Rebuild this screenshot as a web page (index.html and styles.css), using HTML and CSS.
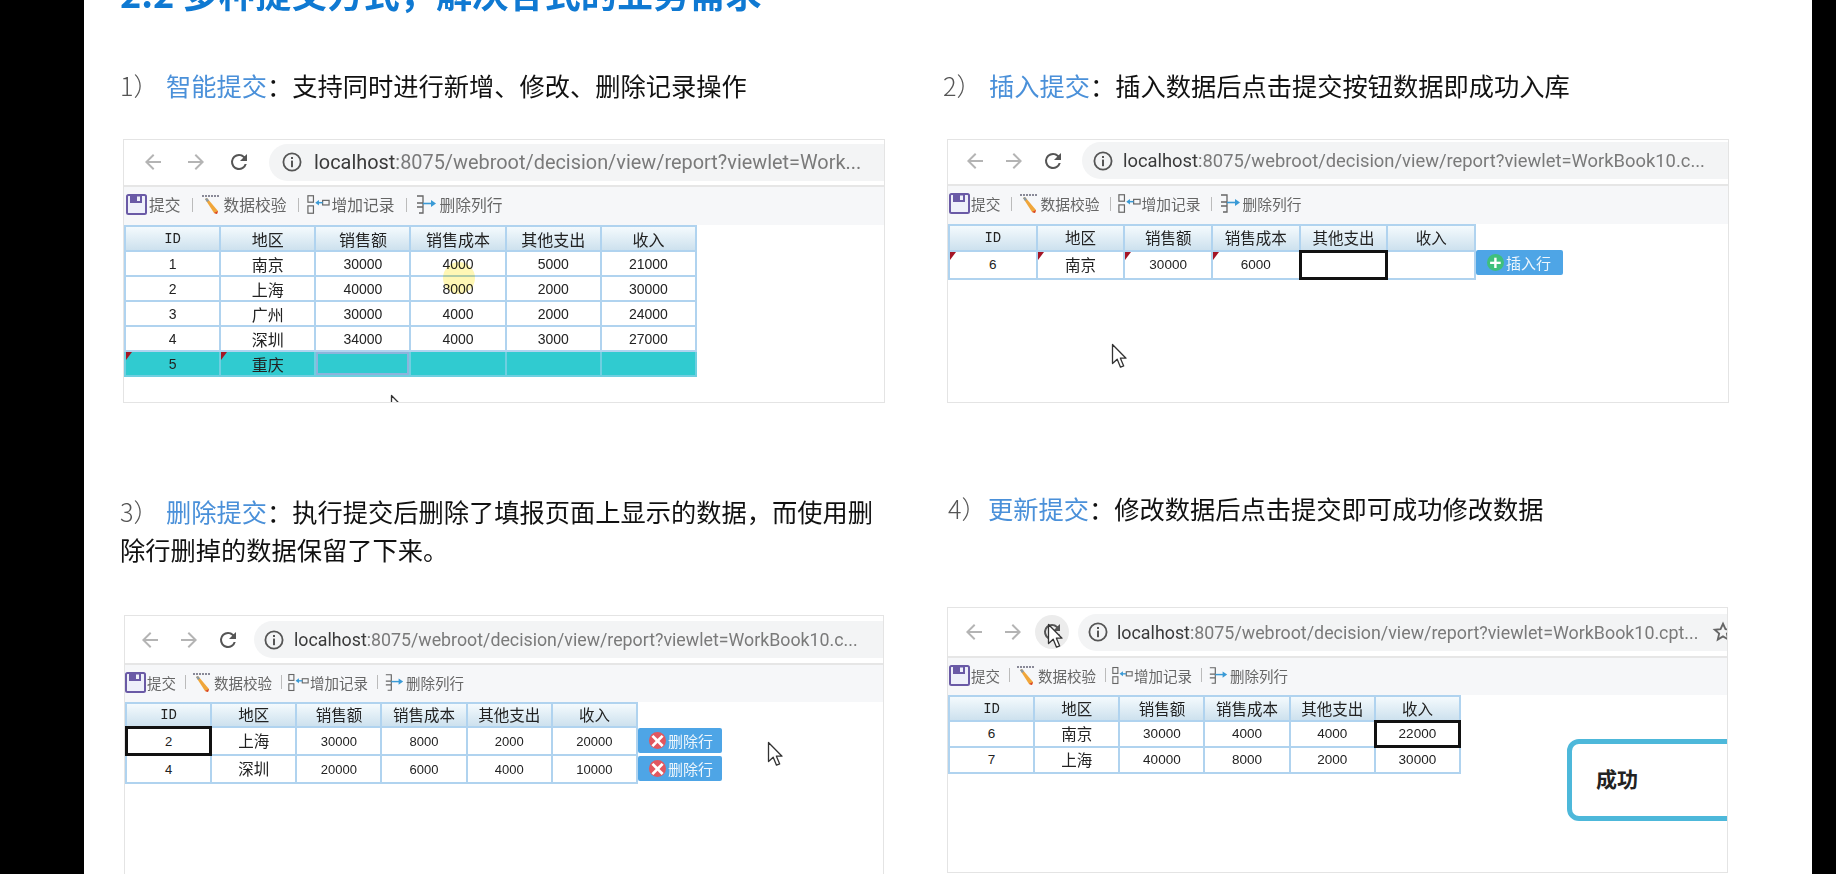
FILE: index.html
```html
<!DOCTYPE html>
<html lang="zh-CN">
<head>
<meta charset="utf-8">
<title>多种提交方式</title>
<link rel="stylesheet" href="styles.css">
</head>
<body>
<svg class="defs" aria-hidden="true">
  <symbol id="i-back" viewBox="0 0 24 24"><path d="M20 11H7.8l5.6-5.6L12 4l-8 8 8 8 1.4-1.4L7.8 13H20z"/></symbol>
  <symbol id="i-forward" viewBox="0 0 24 24"><path d="M4 11h12.2l-5.6-5.6L12 4l8 8-8 8-1.4-1.4 5.6-5.6H4z"/></symbol>
  <symbol id="i-reload" viewBox="0 0 24 24"><path d="M17.65 6.35A7.96 7.96 0 0 0 12 4a8 8 0 1 0 7.73 10h-2.08A6 6 0 1 1 12 6c1.66 0 3.14.69 4.22 1.78L13 11h7V4z"/></symbol>
  <symbol id="i-info" viewBox="0 0 22 22"><circle cx="11" cy="11" r="8.6" fill="none" stroke="#555" stroke-width="1.8"/><rect x="10" y="9.6" width="2" height="6.6" fill="#555"/><rect x="10" y="6" width="2" height="2" fill="#555"/></symbol>
  <symbol id="i-star" viewBox="0 0 24 24"><path d="M12 3l2.7 6 6.3.6-4.8 4.2 1.5 6.4L12 16.8l-5.7 3.4 1.5-6.4L3 9.6 9.300 9z" fill="none" stroke="#666" stroke-width="2"/></symbol>
  <symbol id="i-save" viewBox="0 0 21 21"><rect x="1" y="1" width="19" height="19" rx="1.500" fill="#eef0fa" stroke="#6a5aa6" stroke-width="2"/><rect x="4" y="1" width="12" height="8" fill="#6a5aa6"/><rect x="11" y="2.500" width="3" height="4.500" fill="#eef0fa"/></symbol>
  <symbol id="i-check" viewBox="0 0 21 21"><path d="M1 2h17" stroke="#667" stroke-width="1.500" stroke-dasharray="2 1" fill="none"/><path d="M4 5l2-1 11 13-1 3-3-1z" fill="#f0a63a"/><path d="M13 19l3 1 1-3z" fill="#d9402c"/><path d="M4 5l2-1 2 2.500-2 1.500z" fill="#8a9aa6"/></symbol>
  <symbol id="i-add" viewBox="0 0 25 21" preserveAspectRatio="xMinYMid meet"><g fill="none" stroke="#666" stroke-width="1.300"><rect x="1" y="1" width="6" height="7"/><rect x="1" y="12" width="6" height="8"/><rect x="17" y="6" width="7" height="5"/></g><path d="M17 8.500h-5" stroke="#3a9ad6" stroke-width="1.600"/><path d="M9 8.500l4-3v6z" fill="#3a9ad6"/></symbol>
  <symbol id="i-del" viewBox="0 0 23 21" preserveAspectRatio="xMinYMid meet"><path d="M2 2h6v7H2M8 9v4H2M8 13v6H4" fill="none" stroke="#666" stroke-width="1.300"/><path d="M8 9.500h9" stroke="#3a9ad6" stroke-width="1.600"/><path d="M21 9.500l-5-3.500v7z" fill="#3a9ad6"/></symbol>
  <symbol id="i-cursor" viewBox="0 0 16 26"><path d="M1.500 1.500v19l4.700-4.300 3.300 8 3.200-1.300-3.300-7.700h5.600z" fill="#fff" stroke="#333" stroke-width="1.300" stroke-linejoin="round"/></symbol>
</svg>

<main class="slide">
  <h1 class="title">2.2 多种提交方式，解决各式的业务需求</h1>
  <div class="board">

    <section class="item item-1">
      <p class="desc"><span class="num">1）</span><span class="label">智能提交</span>：支持同时进行新增、修改、删除记录操作</p>
      <div class="shot shot-1">
        <div class="chrome">
          <svg class="nav nav-off"><use href="#i-back"/></svg>
          <svg class="nav nav-off"><use href="#i-forward"/></svg>
          <svg class="nav nav-on"><use href="#i-reload"/></svg>
          <div class="pill"><svg class="info"><use href="#i-info"/></svg><span class="url"><b>localhost</b>:8075/webroot/decision/view/report?viewlet=Work...</span></div>
        </div>
        <div class="tools">
          <svg class="ti"><use href="#i-save"/></svg><span class="tt">提交</span><i class="ts"></i>
          <svg class="ti"><use href="#i-check"/></svg><span class="tt">数据校验</span><i class="ts"></i>
          <svg class="ti ti-wide"><use href="#i-add"/></svg><span class="tt">增加记录</span><i class="ts"></i>
          <svg class="ti ti-wide"><use href="#i-del"/></svg><span class="tt">删除列行</span>
        </div>
        <div class="sheet">
          <table>
            <thead><tr><th class="mono">ID</th><th>地区</th><th>销售额</th><th>销售成本</th><th>其他支出</th><th>收入</th></tr></thead>
            <tbody>
              <tr><td>1</td><td class="cjk">南京</td><td>30000</td><td>4000</td><td>5000</td><td>21000</td></tr>
              <tr><td>2</td><td class="cjk">上海</td><td>40000</td><td>8000</td><td>2000</td><td>30000</td></tr>
              <tr><td>3</td><td class="cjk">广州</td><td>30000</td><td>4000</td><td>2000</td><td>24000</td></tr>
              <tr><td>4</td><td class="cjk">深圳</td><td>34000</td><td>4000</td><td>3000</td><td>27000</td></tr>
              <tr class="row-new"><td class="flag">5</td><td class="cjk flag">重庆</td><td class="cell-soft"></td><td></td><td></td><td></td></tr>
            </tbody>
          </table>
        </div>
        <span class="spot"></span>
        <svg class="cursor cursor-1"><use href="#i-cursor"/></svg>
      </div>
    </section>

    <section class="item item-2">
      <p class="desc"><span class="num">2）</span><span class="label">插入提交</span>：插入数据后点击提交按钮数据即成功入库</p>
      <div class="shot shot-2">
        <div class="chrome">
          <svg class="nav nav-off"><use href="#i-back"/></svg>
          <svg class="nav nav-off"><use href="#i-forward"/></svg>
          <svg class="nav nav-on"><use href="#i-reload"/></svg>
          <div class="pill"><svg class="info"><use href="#i-info"/></svg><span class="url"><b>localhost</b>:8075/webroot/decision/view/report?viewlet=WorkBook10.c...</span></div>
        </div>
        <div class="tools">
          <svg class="ti"><use href="#i-save"/></svg><span class="tt">提交</span><i class="ts"></i>
          <svg class="ti"><use href="#i-check"/></svg><span class="tt">数据校验</span><i class="ts"></i>
          <svg class="ti ti-wide"><use href="#i-add"/></svg><span class="tt">增加记录</span><i class="ts"></i>
          <svg class="ti ti-wide"><use href="#i-del"/></svg><span class="tt">删除列行</span>
        </div>
        <div class="sheet">
          <table>
            <thead><tr><th class="mono">ID</th><th>地区</th><th>销售额</th><th>销售成本</th><th>其他支出</th><th>收入</th></tr></thead>
            <tbody>
              <tr><td class="flag">6</td><td class="cjk flag">南京</td><td class="flag">30000</td><td class="flag">6000</td><td class="cell-active"></td><td></td></tr>
            </tbody>
          </table>
          <div class="actions">
            <button class="act"><span class="badge badge-add">+</span>插入行</button>
          </div>
        </div>
        <svg class="cursor cursor-2"><use href="#i-cursor"/></svg>
      </div>
    </section>

    <section class="item item-3">
      <p class="desc"><span class="num">3）</span><span class="label">删除提交</span>：执行提交后删除了填报页面上显示的数据，而使用删除行删掉的数据保留了下来。</p>
      <div class="shot shot-3">
        <div class="chrome">
          <svg class="nav nav-off"><use href="#i-back"/></svg>
          <svg class="nav nav-off"><use href="#i-forward"/></svg>
          <svg class="nav nav-on"><use href="#i-reload"/></svg>
          <div class="pill"><svg class="info"><use href="#i-info"/></svg><span class="url"><b>localhost</b>:8075/webroot/decision/view/report?viewlet=WorkBook10.c...</span></div>
        </div>
        <div class="tools">
          <svg class="ti"><use href="#i-save"/></svg><span class="tt">提交</span><i class="ts"></i>
          <svg class="ti"><use href="#i-check"/></svg><span class="tt">数据校验</span><i class="ts"></i>
          <svg class="ti ti-wide"><use href="#i-add"/></svg><span class="tt">增加记录</span><i class="ts"></i>
          <svg class="ti ti-wide"><use href="#i-del"/></svg><span class="tt">删除列行</span>
        </div>
        <div class="sheet">
          <table>
            <thead><tr><th class="mono">ID</th><th>地区</th><th>销售额</th><th>销售成本</th><th>其他支出</th><th>收入</th></tr></thead>
            <tbody>
              <tr><td class="cell-active">2</td><td class="cjk">上海</td><td>30000</td><td>8000</td><td>2000</td><td>20000</td></tr>
              <tr><td>4</td><td class="cjk">深圳</td><td>20000</td><td>6000</td><td>4000</td><td>10000</td></tr>
            </tbody>
          </table>
          <div class="actions">
            <button class="act"><span class="badge badge-del">×</span>删除行</button>
            <button class="act"><span class="badge badge-del">×</span>删除行</button>
          </div>
        </div>
        <svg class="cursor cursor-3"><use href="#i-cursor"/></svg>
      </div>
    </section>

    <section class="item item-4">
      <p class="desc"><span class="num">4）</span><span class="label">更新提交</span>：修改数据后点击提交即可成功修改数据</p>
      <div class="shot shot-4">
        <div class="chrome">
          <svg class="nav nav-off"><use href="#i-back"/></svg>
          <svg class="nav nav-off"><use href="#i-forward"/></svg>
          <svg class="nav nav-on nav-hover"><use href="#i-reload"/></svg>
          <div class="pill"><svg class="info"><use href="#i-info"/></svg><span class="url"><b>localhost</b>:8075/webroot/decision/view/report?viewlet=WorkBook10.cpt...</span><svg class="star"><use href="#i-star"/></svg></div>
        </div>
        <div class="tools">
          <svg class="ti"><use href="#i-save"/></svg><span class="tt">提交</span><i class="ts"></i>
          <svg class="ti"><use href="#i-check"/></svg><span class="tt">数据校验</span><i class="ts"></i>
          <svg class="ti ti-wide"><use href="#i-add"/></svg><span class="tt">增加记录</span><i class="ts"></i>
          <svg class="ti ti-wide"><use href="#i-del"/></svg><span class="tt">删除列行</span>
        </div>
        <div class="sheet">
          <table>
            <thead><tr><th class="mono">ID</th><th>地区</th><th>销售额</th><th>销售成本</th><th>其他支出</th><th>收入</th></tr></thead>
            <tbody>
              <tr><td>6</td><td class="cjk">南京</td><td>30000</td><td>4000</td><td>4000</td><td class="cell-active">22000</td></tr>
              <tr><td>7</td><td class="cjk">上海</td><td>40000</td><td>8000</td><td>2000</td><td>30000</td></tr>
            </tbody>
          </table>
        </div>
        <div class="toast">成功</div>
        <svg class="cursor cursor-4"><use href="#i-cursor"/></svg>
      </div>
    </section>

  </div>
</main>
</body>
</html>
```

FILE: styles.css
```css
* { box-sizing: border-box; }

html, body {
  margin: 0;
  height: 100%;
  background: #000;
  overflow: hidden;
}

body {
  font-family: "Noto Sans CJK SC", "Noto Sans", sans-serif;
}

.defs { display: none; }

.slide {
  width: 1728px;
  height: 874px;
  margin-left: 84px;
  padding-left: 36px;
  background: #fff;
  overflow: hidden;
}

.title {
  margin: -26px 0 0;
  height: 95px;
  font-size: 36.200px;
  line-height: 36px;
  font-weight: 700;
  color: #0f79d2;
  white-space: nowrap;
}

.board {
  display: grid;
  grid-template-columns: 823px 1fr;
  grid-template-rows: 334px 1fr;
  row-gap: 87px;
}

.desc {
  margin: -3px 0 0;
  font-size: 25.250px;
  line-height: 38px;
  color: #111;
}

.num {
  display: inline-block;
  width: var(--num-w);
  color: #555;
  font-weight: 300;
}

.label { color: #4a90d9; }

.item-1 { --num-w: 46px; }
.item-2 { --num-w: 46px; }
.item-3 { --num-w: 46px; padding-top: 5px; }
.item-4 { --num-w: 40px; padding-left: 5px; padding-top: 2px; }

.item-3 .desc { max-width: 760px; }

/* screenshot panel */
.shot {
  position: relative;
  overflow: hidden;
  background: #fff;
  border: 1px solid #e4e4e4;
  width: var(--w);
  height: var(--h);
  margin-top: var(--mt);
  margin-left: var(--ml);
}

.shot-1 {
  --w: 762px; --h: 264px; --mt: 35px; --ml: 3px;
  --bar-h: 47px; --bar-pb: 1px; --pad: 17px; --nav-gap: 19px; --pill-ml: 18px; --pill-pl: 12px; --info-gap: 11px; --url: 19.900px;
  --tool-h: 38px; --tool-size: 15.750px; --tool-pl: 2px; --ts-l: 11px; --ts-r: 8px; --ti-gap: 2px; --wide: 23px;
  --cw: 95.500px; --th-h: 25px; --td-h: 25px; --num: 14px; --cjk: 16px; --act-w: 85px;
}
.shot-2 {
  --w: 782px; --h: 264px; --mt: 35px; --ml: 4px;
  --bar-h: 46px; --bar-pb: 3px; --pad: 15px; --nav-gap: 15px; --pill-ml: 17px; --pill-pl: 10px; --info-gap: 9px; --url: 18.370px;
  --tool-h: 38px; --tool-size: 14.750px; --tool-pl: 1px; --ts-l: 10px; --ts-r: 7px; --ti-gap: 1px; --wide: 23px;
  --cw: 88px; --th-h: 26px; --td-h: 28px; --num: 13.500px; --cjk: 15.500px; --act-w: 87px;
}
.shot-3 {
  --w: 760px; --h: 300px; --mt: 47px; --ml: 4px;
  --bar-h: 49px; --bar-pb: 0px; --pad: 13px; --nav-gap: 15px; --pill-ml: 14px; --pill-pl: 9px; --info-gap: 9px; --url: 17.800px;
  --tool-h: 37px; --tool-size: 14.500px; --tool-pl: 0px; --ts-l: 9px; --ts-r: 6px; --ti-gap: 1px; --wide: 21px;
  --cw: 85.500px; --th-h: 24px; --td-h: 28px; --num: 13px; --cjk: 15.500px; --act-w: 84px;
}
.shot-4 {
  --w: 781px; --h: 266px; --mt: 80px; --ml: -1px;
  --bar-h: 50px; --bar-pb: 0px; --pad: 14px; --nav-gap: 15px; --pill-ml: 14px; --pill-pl: 9px; --info-gap: 8px; --url: 17.850px;
  --tool-h: 37px; --tool-size: 14.500px; --tool-pl: 1px; --ts-l: 9px; --ts-r: 6px; --ti-gap: 1px; --wide: 21px;
  --cw: 85.500px; --th-h: 25px; --td-h: 26px; --num: 13.500px; --cjk: 15.500px; --act-w: 85px;
}

/* browser bar */
.chrome {
  display: flex;
  align-items: center;
  gap: var(--nav-gap);
  height: var(--bar-h);
  padding-left: var(--pad);
  padding-bottom: var(--bar-pb);
  background: #fff;
  border-bottom: 2px solid #e6e6e6;
}

.nav {
  flex: none;
  width: 24px;
  height: 24px;
}

.nav-off { fill: #b4b4b4; }
.nav-on { fill: #555; }

.nav-hover {
  border-radius: 50%;
  background: #ececec;
  box-shadow: 0 0 0 5px #ececec;
}

.pill {
  flex: 1;
  display: flex;
  align-items: center;
  height: 37px;
  margin-left: calc(var(--pill-ml) - var(--nav-gap));
  margin-right: -30px;
  padding-left: var(--pill-pl);
  background: #f3f4f5;
  border-radius: 19px 0 0 19px;
}

.info {
  flex: none;
  width: 22px;
  height: 22px;
  margin-right: var(--info-gap);
}

.url {
  font-family: Roboto, sans-serif;
  font-size: var(--url);
  color: #7a7a7a;
  white-space: nowrap;
}

.url b {
  font-weight: 400;
  color: #3a3a3a;
}

.star {
  flex: none;
  width: 22px;
  height: 22px;
  margin-left: 14px;
}

/* report toolbar */
.tools {
  display: flex;
  align-items: center;
  height: var(--tool-h);
  padding-left: var(--tool-pl);
  padding-bottom: 3px;
  background: #f6f7f9;
  font-size: var(--tool-size);
  color: #666;
}

.ti {
  flex: none;
  width: 21px;
  height: 21px;
  margin-right: var(--ti-gap);
}

.ti-wide { width: var(--wide); }

.tt { white-space: nowrap; }

.ts {
  flex: none;
  width: 1px;
  height: 14px;
  margin: 0 var(--ts-r) 0 var(--ts-l);
  background: #bbb;
}

/* data table */
.sheet { display: flex; }

table {
  flex: none;
  width: calc(var(--cw) * 6);
  table-layout: fixed;
  border-collapse: collapse;
  color: #222;
  font-family: "Liberation Sans", "Noto Sans CJK SC", sans-serif;
}

th, td {
  padding: 0;
  border: 2px solid #b0d3ef;
  text-align: center;
  font-weight: 400;
  position: relative;
  line-height: 1;
}

th {
  height: var(--th-h);
  font-size: var(--cjk);
  font-family: "Noto Sans CJK SC", sans-serif;
  background: linear-gradient(#f4fafd, #cde1ee);
}

th.mono {
  font-family: "Liberation Mono", monospace;
  font-size: 14px;
}

td {
  height: var(--td-h);
  font-size: var(--num);
  background: #fff;
}

td.cjk {
  font-family: "Noto Sans CJK SC", sans-serif;
  font-size: var(--cjk);
}

.row-new td {
  background: #30cbd0;
  border-color: #6fcfe0;
}

.row-new .cell-soft { box-shadow: inset 0 0 0 2px #8cb4dc; }

.flag::before {
  content: "";
  position: absolute;
  left: 0;
  top: 0;
  border-style: solid;
  border-width: 8px 6px 0 0;
  border-color: #a51525 transparent transparent transparent;
}

.cell-active { outline: 3px solid #111; outline-offset: -2px; }

.actions {
  display: flex;
  flex-direction: column;
  gap: 3px;
  margin-top: 26px;
}

.act {
  display: flex;
  align-items: center;
  gap: 2px;
  width: var(--act-w);
  height: 25px;
  padding: 0 0 0 11px;
  border: 0;
  border-radius: 2px;
  background: #4ea5e6;
  color: #eef6fc;
  font-family: "Noto Sans CJK SC", sans-serif;
  font-size: 15px;
}

.badge {
  flex: none;
  display: flex;
  align-items: center;
  justify-content: center;
  width: 17px;
  height: 17px;
  border-radius: 50%;
  color: #fff;
  font-family: "Liberation Sans", sans-serif;
  font-weight: 700;
  line-height: 1;
}

.badge-add { background: #3fc07c; font-size: 21px; }
.badge-del { background: #e2565f; font-size: 24px; }

/* overlays */
.cursor {
  position: absolute;
  width: 16px;
  height: 26px;
}

.cursor-1 { left: 266px; top: 254px; }
.cursor-2 { left: 163px; top: 203px; }
.cursor-3 { left: 642px; top: 125px; }
.cursor-4 { left: 99px; top: 15px; }

.spot {
  position: absolute;
  left: 319px;
  top: 122px;
  width: 32px;
  height: 32px;
  border-radius: 50%;
  background: rgba(255, 240, 120, 0.55);
  mix-blend-mode: multiply;
}

.toast {
  position: absolute;
  left: 619px;
  top: 131px;
  width: 220px;
  height: 82px;
  padding-left: 24px;
  border: 5px solid #4db8da;
  border-radius: 12px;
  background: #fff;
  font-size: 21px;
  font-weight: 700;
  line-height: 68px;
  color: #222;
}
```
